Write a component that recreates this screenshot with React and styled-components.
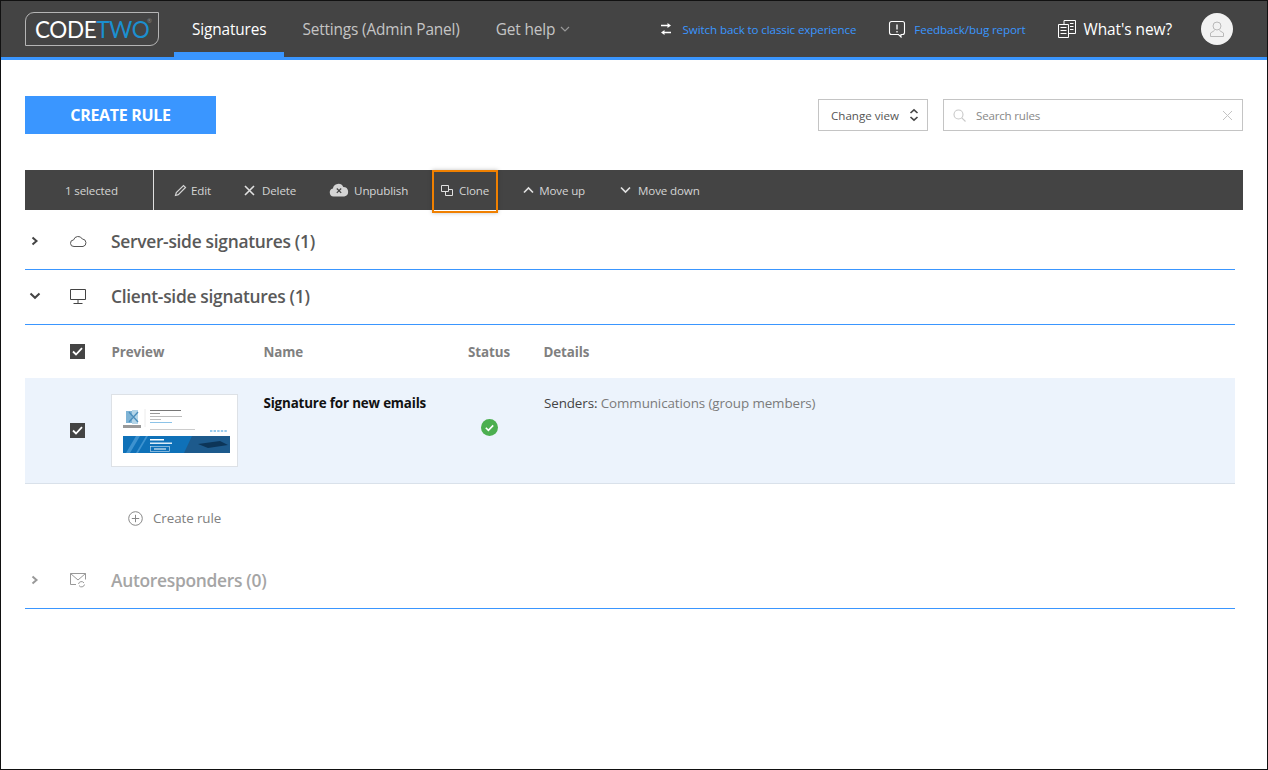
import styled, { createGlobalStyle } from 'styled-components';

const blue = '#3a96ff';
const dark = '#444444';

const GlobalStyle = createGlobalStyle`
  html, body {
    margin: 0;
    padding: 0;
    background: #fff;
  }
  body {
    font-family: 'Open Sans', 'Noto Sans', 'Liberation Sans', sans-serif;
  }
`;

const Frame = styled.div`
  box-sizing: border-box;
  width: 1268px;
  height: 770px;
  border: 1px solid #111;
  overflow: hidden;
`;

const Header = styled.header`
  display: flex;
  align-items: stretch;
  height: 56px;
  padding-left: 24px;
  background: ${dark};
  border-bottom: 3px solid ${blue};
`;

const Logo = styled.div`
  position: relative;
  box-sizing: border-box;
  display: flex;
  align-items: center;
  width: 134px;
  height: 34px;
  margin-top: 11px;
  padding-left: 9px;
  border: 1px solid #b5b5b5;
  border-radius: 9px 0 9px 0;
  font-family: 'Lato', 'Noto Sans', sans-serif;
  font-size: 22.5px;
  font-weight: 400;
  letter-spacing: -0.4px;
  color: #fff;

  span {
    color: #1b8fd0;
  }

  small {
    position: absolute;
    top: 4px;
    right: 6px;
    font-size: 6px;
    letter-spacing: 0;
    color: #8a8a8a;
  }
`;

const Nav = styled.nav`
  display: flex;
  margin-left: 15px;
`;

const Tab = styled.div`
  position: relative;
  display: flex;
  align-items: center;
  gap: 5px;
  height: 56px;
  padding: 0 18px;
  font-size: 15.4px;
  letter-spacing: -0.15px;
  color: ${(p) => (p.$active ? '#fff' : '#c4c4c4')};

  &::after {
    content: '';
    display: ${(p) => (p.$active ? 'block' : 'none')};
    position: absolute;
    left: 0;
    right: 0;
    bottom: -3px;
    height: 8px;
    background: ${blue};
  }
`;

const HeaderRight = styled.div`
  display: flex;
  align-items: center;
  margin-left: auto;
  padding-right: 34px;
`;

const HeaderLink = styled.a`
  display: flex;
  align-items: center;
  gap: ${(p) => p.$gap || 8}px;
  margin-right: ${(p) => p.$mr || 0}px;
  font-size: ${(p) => (p.$big ? '15.4px' : '11.6px')};
  letter-spacing: ${(p) => (p.$big ? '-0.05px' : '-0.11px')};
  color: ${(p) => (p.$big ? '#fff' : '#3a96ff')};
`;

const Avatar = styled.div`
  display: flex;
  align-items: center;
  justify-content: center;
  width: 32px;
  height: 32px;
  margin-left: 29px;
  border-radius: 50%;
  background: #f2f2f2;
`;

const Main = styled.main`
  padding: 36px 24px 0;
`;

const TopBar = styled.div`
  display: flex;
  align-items: center;
  height: 38px;
`;

const CreateButton = styled.button`
  width: 191px;
  height: 38px;
  border: 0;
  background: ${blue};
  color: #fff;
  font-family: inherit;
  font-size: 16px;
  font-weight: 700;
  letter-spacing: -0.3px;
`;

const ViewSelect = styled.div`
  box-sizing: border-box;
  display: flex;
  align-items: center;
  justify-content: space-between;
  width: 110px;
  height: 32px;
  margin-left: auto;
  padding: 0 8px 0 12px;
  border: 1px solid #c4c4c4;
  font-size: 11.6px;
  color: #555;
`;

const SearchBox = styled.div`
  box-sizing: border-box;
  display: flex;
  align-items: center;
  gap: 10px;
  width: 300px;
  height: 32px;
  margin-left: 15px;
  padding: 0 9px;
  border: 1px solid #c4c4c4;
  font-size: 11.6px;
  letter-spacing: -0.2px;
  color: #888;

  svg:last-child {
    margin-left: auto;
  }
`;

const ActionBar = styled.div`
  display: flex;
  align-items: center;
  height: 40px;
  margin-top: 36px;
  background: ${dark};
  font-size: 11.6px;
  letter-spacing: -0.15px;
  color: #d4d4d4;
`;

const SelectedCount = styled.div`
  box-sizing: border-box;
  display: flex;
  align-items: center;
  width: 129px;
  height: 40px;
  padding-left: 40px;
  border-right: 1px solid #e0e0e0;
`;

const Action = styled.div`
  position: relative;
  display: flex;
  align-items: center;
  gap: ${(p) => p.$gap || 5}px;
  margin-left: ${(p) => p.$ml}px;
`;

const Highlight = styled.div`
  position: absolute;
  left: -9px;
  right: -9px;
  top: -13px;
  height: 43px;
  box-sizing: border-box;
  border: 2px solid #f08000;
  box-shadow: 0 0 4px rgba(0, 0, 0, 0.25);
`;

const Sections = styled.div`
  width: 1210px;
`;

const SectionHead = styled.div`
  display: flex;
  align-items: center;
  box-sizing: border-box;
  height: ${(p) => p.$h}px;
  padding-top: ${(p) => p.$pt || 0}px;
  padding-bottom: ${(p) => p.$pb || 0}px;
  border-bottom: 1px solid ${blue};
  font-size: 17.4px;
  font-weight: 600;
  letter-spacing: -0.3px;
  color: ${(p) => (p.$muted ? '#a5a5a5' : '#595959')};
`;

const Chevron = styled.div`
  display: flex;
  justify-content: center;
  box-sizing: border-box;
  width: 45px;
  padding-right: 25px;
`;

const SectionIcon = styled.div`
  display: flex;
  width: 41px;
`;

const TableHead = styled.div`
  display: grid;
  grid-template-columns: 45px 41.5px 152px 204.5px 75.5px 1fr;
  align-items: center;
  height: 53px;
  padding-top: 1px;
  box-sizing: border-box;
  font-size: 13.4px;
  font-weight: 700;
  letter-spacing: -0.1px;
  color: #808080;
`;

const Row = styled.div`
  display: grid;
  grid-template-columns: 45px 41px 152.5px 205px 75.5px 1fr;
  box-sizing: border-box;
  height: 106px;
  background: #ecf3fc;
  border-bottom: 1px solid #d9e1ea;
`;

const Check = styled.div`
  grid-column: 2;
  display: flex;
  align-items: center;
  justify-content: center;
  width: 15px;
  height: 15px;
  background: #444;
  align-self: ${(p) => (p.$row ? 'start' : 'center')};
  margin-top: ${(p) => (p.$row ? 45 : -1)}px;
`;

const Thumb = styled.div`
  box-sizing: border-box;
  width: 127px;
  height: 73px;
  margin-top: 16px;
  background: #fff;
  border: 1px solid #dde1e6;

  svg {
    display: block;
    filter: blur(0.3px);
  }
`;

const RuleName = styled.div`
  padding-top: 16px;
  font-size: 13.4px;
  font-weight: 700;
  letter-spacing: -0.17px;
  line-height: 18px;
  color: #111;
`;

const StatusCell = styled.div`
  padding: 41px 0 0 12.5px;
`;

const Details = styled.div`
  padding-top: 16px;
  font-size: 13.4px;
  letter-spacing: -0.1px;
  line-height: 18px;
  color: #444;

  span {
    color: #7b7b7b;
  }
`;

const AddRule = styled.div`
  display: flex;
  align-items: center;
  gap: 10px;
  height: 68px;
  padding-left: 103px;
  font-size: 13.4px;
  letter-spacing: -0.1px;
  color: #808080;
`;

const ChevronRight = ({ color = '#444' }) => (
  <svg width="10" height="12" viewBox="0 0 10 12">
    <path d="M2.5 2.5 6.5 6l-4 3.5" fill="none" stroke={color} strokeWidth="2" />
  </svg>
);

const ChevronDown = () => (
  <svg width="12" height="10" viewBox="0 0 12 10">
    <path d="M1.5 2.5 6 6.8l4.5-4.3" fill="none" stroke="#444" strokeWidth="2" />
  </svg>
);

const CheckMark = () => (
  <svg width="11" height="9" viewBox="0 0 11 9">
    <path d="M1 4.5 4 7.5 10 1.2" fill="none" stroke="#fff" strokeWidth="1.8" />
  </svg>
);

const SignatureThumb = () => (
  <svg width="125" height="71" viewBox="0 0 125 71">
    <rect x="14" y="16" width="6" height="12" fill="#7fb4d6" />
    <path d="M20 15h6v14h-6z" fill="#b4d5e8" />
    <path d="M17 17l9 10M26 17l-9 10" stroke="#4a8dbb" strokeWidth="1.3" fill="none" />
    <rect x="11" y="30" width="18" height="3" fill="#555" opacity=".6" />
    <path d="M33 14v18" stroke="#ececec" />
    <rect x="38" y="15" width="31" height="1" fill="#777" />
    <rect x="38" y="18" width="10" height="1" fill="#999" />
    <rect x="38" y="21" width="32" height="1" fill="#bbb" />
    <rect x="38" y="24" width="11" height="1" fill="#bbb" />
    <rect x="38" y="27" width="22" height="1" fill="#8cc3e8" />
    <rect x="38" y="34" width="45" height="1" fill="#ccc" />
    <path d="M98 36h17" stroke="#9accee" strokeWidth="2" strokeDasharray="2.4 1.2" />
    <rect x="11" y="41" width="107" height="17" fill="#0f71b8" />
    <path d="M14 58l10-17h4L18 58zM24 58l10-17h2L26 58z" fill="#3d92cf" />
    <path d="M80 41h38v17H72z" fill="#1d5a8c" />
    <path d="M86 49l22-3 8 4-20 3z" fill="#0c3558" />
    <rect x="38" y="44" width="14" height="1.5" fill="#fff" />
    <rect x="38" y="47.5" width="22" height="1.5" fill="#dcecf8" />
    <rect x="38.5" y="51.5" width="19" height="5" fill="none" stroke="#cfe4f4" strokeWidth=".6" />
    <rect x="42" y="53.5" width="12" height="1" fill="#fff" />
  </svg>
);

export default function App() {
  return (
    <>
      <GlobalStyle />
      <Frame>
        <Header>
          <Logo>
            CODE<span>TWO</span>
            <small>®</small>
          </Logo>
          <Nav>
            <Tab $active>Signatures</Tab>
            <Tab>Settings (Admin Panel)</Tab>
            <Tab>
              Get help
              <svg width="10" height="8" viewBox="0 0 10 8">
                <path d="M1 2l4 4 4-4" fill="none" stroke="#999" strokeWidth="1.2" />
              </svg>
            </Tab>
          </Nav>
          <HeaderRight>
            <HeaderLink $gap={11} $mr={32}>
              <svg width="12" height="12" viewBox="0 0 12 12" fill="#fff">
                <path d="M7.5 0 11 2.5 7.500 5V3.300H1V1.700h6.500zM4.500 7 1 9.500 4.500 12v-1.700H11V8.700H4.500z" />
              </svg>
              Switch back to classic experience
            </HeaderLink>
            <HeaderLink $gap={8} $mr={32}>
              <svg width="18" height="18" viewBox="0 0 18 18" fill="none" stroke="#fff" strokeWidth="1.1">
                <path d="M3.500 1.500h11a2 2 0 0 1 2 2v9a2 2 0 0 1-2 2h-1.500v2.500l-2.500-2.500h-7a2 2 0 0 1-2-2v-9a2 2 0 0 1 2-2z" />
                <path d="M9 4.500v5M9 11v1.500" strokeWidth="1.3" />
              </svg>
              Feedback/bug report
            </HeaderLink>
            <HeaderLink $big $gap={8}>
              <svg width="18" height="18" viewBox="0 0 18 18" fill="none" stroke="#fff" strokeWidth="1">
                <path d="M.5 4.500h10v13H.5zM6 4.500V.5h11.500v13H10.500" />
                <path d="M2.500 7.500h6M2.500 10.500h6M2.500 13.500h6M12 3.500h3.500M12 6.500h3.500M12 9.500h3.500" />
              </svg>
              What's new?
            </HeaderLink>
            <Avatar>
              <svg width="16" height="18" viewBox="0 0 16 18" fill="none" stroke="#b9b9b9" strokeWidth="1">
                <circle cx="8" cy="6" r="4" />
                <path d="M5.500 10.500 1.500 13v3.500h13V13l-4-2.500" />
              </svg>
            </Avatar>
          </HeaderRight>
        </Header>

        <Main>
          <TopBar>
            <CreateButton>CREATE RULE</CreateButton>
            <ViewSelect>
              Change view
              <svg width="10" height="14" viewBox="0 0 10 14">
                <path d="M1.500 5 5 1.800 8.500 5M1.500 9 5 12.200 8.500 9" fill="none" stroke="#444" strokeWidth="1.6" />
              </svg>
            </ViewSelect>
            <SearchBox>
              <svg width="13" height="13" viewBox="0 0 13 13" fill="none" stroke="#c8c8c8" strokeWidth="1.1">
                <circle cx="5.500" cy="5.500" r="4.500" />
                <path d="M8.800 8.800 12.500 12.500" />
              </svg>
              Search rules
              <svg width="11" height="11" viewBox="0 0 11 11" fill="none" stroke="#c4c4c4" strokeWidth="1">
                <path d="M1 1l9 9M10 1l-9 9" />
              </svg>
            </SearchBox>
          </TopBar>

          <ActionBar>
            <SelectedCount>1 selected</SelectedCount>
            <Action $ml={20} $gap={4}>
              <svg width="13" height="13" viewBox="0 0 13 13" fill="none" stroke="#d4d4d4" strokeWidth="1.2">
                <path d="M1.500 11.500l.8-3L9.500 1.500l2 2-7.200 7.200z" />
              </svg>
              Edit
            </Action>
            <Action $ml={33} $gap={7}>
              <svg width="11" height="11" viewBox="0 0 11 11" fill="none" stroke="#e0e0e0" strokeWidth="1.6">
                <path d="M1 1l9 9M10 1l-9 9" />
              </svg>
              Delete
            </Action>
            <Action $ml={33} $gap={5}>
              <svg width="20" height="14" viewBox="0 0 20 14">
                <path d="M4.500 13.500a4 4 0 0 1-.6-7.900A5.500 5.500 0 0 1 14.300 4a4.800 4.800 0 0 1 1 9.500z" fill="#d4d4d4" />
                <path d="M7.800 5.500l4.400 4.400M12.200 5.500 7.800 9.900" stroke="#444" strokeWidth="1.2" />
              </svg>
              Unpublish
            </Action>
            <Action $ml={33} $gap={6}>
              <Highlight />
              <svg width="12" height="11" viewBox="0 0 12 11" fill="none" stroke="#e0e0e0" strokeWidth="1">
                <path d="M.5.5h7v6h-7zM4.500 6.500v4h7v-6h-4" />
              </svg>
              Clone
            </Action>
            <Action $ml={34} $gap={5}>
              <svg width="11" height="8" viewBox="0 0 11 8">
                <path d="M1 6.500 5.500 2 10 6.500" fill="none" stroke="#e0e0e0" strokeWidth="1.7" />
              </svg>
              Move up
            </Action>
            <Action $ml={35} $gap={7}>
              <svg width="11" height="8" viewBox="0 0 11 8">
                <path d="M1 1.500 5.500 6 10 1.500" fill="none" stroke="#e0e0e0" strokeWidth="1.7" />
              </svg>
              Move down
            </Action>
          </ActionBar>

          <Sections>
            <SectionHead $h={60} $pt={3}>
              <Chevron>
                <ChevronRight />
              </Chevron>
              <SectionIcon>
                <svg width="17" height="12" viewBox="0 0 17 12" fill="none" stroke="#555" strokeWidth="1">
                  <path d="M4 11.500a3.300 3.300 0 0 1-.4-6.600A4.700 4.700 0 0 1 12.300 4a3.800 3.800 0 0 1 .7 7.500z" />
                </svg>
              </SectionIcon>
              Server-side signatures (1)
            </SectionHead>
            <SectionHead $h={55} $pb={2}>
              <Chevron>
                <ChevronDown />
              </Chevron>
              <SectionIcon>
                <svg width="16" height="15" viewBox="0 0 16 15" fill="none" stroke="#444" strokeWidth="1">
                  <path d="M.5.5h15v10H.5zM8 10.500v3.500M3.500 14.500h9" />
                </svg>
              </SectionIcon>
              Client-side signatures (1)
            </SectionHead>

            <TableHead>
              <Check>
                <CheckMark />
              </Check>
              <div>Preview</div>
              <div>Name</div>
              <div>Status</div>
              <div>Details</div>
            </TableHead>

            <Row>
              <Check $row>
                <CheckMark />
              </Check>
              <Thumb>
                <SignatureThumb />
              </Thumb>
              <RuleName>Signature for new emails</RuleName>
              <StatusCell>
                <svg width="17" height="17" viewBox="0 0 17 17">
                  <circle cx="8.500" cy="8.500" r="8.500" fill="#4caf50" />
                  <path d="M4.800 8.800l2.600 2.600 4.800-5" fill="none" stroke="#fff" strokeWidth="1.6" />
                </svg>
              </StatusCell>
              <Details>
                Senders: <span>Communications (group members)</span>
              </Details>
            </Row>

            <AddRule>
              <svg width="15" height="15" viewBox="0 0 15 15" fill="none" stroke="#888" strokeWidth="1">
                <circle cx="7.500" cy="7.500" r="6.800" />
                <path d="M7.500 3.800v7.400M3.800 7.500h7.400" />
              </svg>
              Create rule
            </AddRule>

            <SectionHead $h={57} $muted>
              <Chevron>
                <ChevronRight color="#999" />
              </Chevron>
              <SectionIcon>
                <svg width="16" height="15" viewBox="0 0 16 15" fill="none" stroke="#999" strokeWidth="1">
                  <path d="M6 11.500H.5V.5h15v6M.5.5 8 7l7.500-6.500" />
                  <path d="M8.500 11a3 3 0 0 1 5.500-1M14.500 11.500a3 3 0 0 1-5.500 1" />
                </svg>
              </SectionIcon>
              Autoresponders (0)
            </SectionHead>
          </Sections>
        </Main>
      </Frame>
    </>
  );
}
